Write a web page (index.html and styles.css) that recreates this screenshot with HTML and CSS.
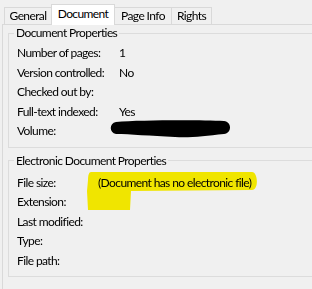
FILE: index.html
```html
<!DOCTYPE html>
<html lang="en">
<head>
    <meta charset="UTF-8">
    <meta name="viewport" content="width=device-width, initial-scale=1.0">
    <title>Document Properties</title>
    <link rel="stylesheet" href="styles.css">
</head>
<body>
    <div class="tabs">
        <div class="tab">General</div>
        <div class="tab active">Document</div>
        <div class="tab">Page Info</div>
        <div class="tab">Rights</div>
    </div>
    <div class="panel">
        <fieldset class="group">
            <legend>Document Properties</legend>
            <div class="row"><span class="label">Number of pages:</span><span class="value">1</span></div>
            <div class="row"><span class="label">Version controlled:</span><span class="value">No</span></div>
            <div class="row"><span class="label">Checked out by:</span><span class="value"></span></div>
            <div class="row"><span class="label">Full-text indexed:</span><span class="value">Yes</span></div>
            <div class="row"><span class="label">Volume:</span><span class="value"></span></div>
        </fieldset>
        <fieldset class="group group-file">
            <legend>Electronic Document Properties</legend>
            <div class="row"><span class="label">File size:</span><span class="value">(Document has no electronic file)</span></div>
            <div class="row"><span class="label">Extension:</span><span class="value"></span></div>
            <div class="row"><span class="label">Last modified:</span><span class="value"></span></div>
            <div class="row"><span class="label">Type:</span><span class="value"></span></div>
            <div class="row"><span class="label">File path:</span><span class="value"></span></div>
        </fieldset>
    </div>

    <!-- markup drawn over the screenshot -->
    <svg class="mark mark-highlight" width="312" height="289" viewBox="0 0 312 289">
        <path d="M91 172 L252 172 C258 172 259 190 252 190 L131 191 L130 210 L88 210 L87 191 L88 180 C88 175 89 172 91 172 Z" fill="#fff400"/>
    </svg>
    <svg class="mark" width="312" height="289" viewBox="0 0 312 289">
        <path d="M116 122 C140 120 200 120 224 121 C232 122 232 133 224 134 C205 136 190 138 175 137 C150 136 130 134 116 134 C109 133 109 123 116 122 Z" fill="#000"/>
    </svg>
</body>
</html>
```

FILE: styles.css
```css
body {
    margin: 0;
    background: #f0f0f0;
    color: #000;
    font-family: Lato, 'Noto Sans', sans-serif;
    font-size: 12px;
    letter-spacing: -0.6px;
    height: 289px;
    overflow: hidden;
    position: relative;
}
.tabs {
    display: flex;
    align-items: flex-end;
    height: 24px;
    padding-left: 4px;
}
.tab {
    box-sizing: border-box;
    height: 17px;
    border: 1px solid #d9d9d9;
    border-bottom: none;
    display: flex;
    align-items: center;
    justify-content: center;
    width: 48px;
    line-height: 15px;
    padding-bottom: 2px;
}
.tab.active {
    position: relative;
    z-index: 1;
    width: 64px;
    height: 21px;
    margin: 0 -1px -1px -1px;
    background: #fff;
    padding-bottom: 4px;
}
.tab:nth-child(3) { width: 58px; }
.tab:nth-child(4) { width: 41px; margin-left: -1px; }
.panel {
    border-top: 1px solid #d9d9d9;
    border-left: 1px solid #d9d9d9;
    margin-left: 2px;
    margin-right: -10px;
    height: 264px;
}
.group {
    border: 1px solid #dcdcdc;
    margin: 0 0 0 5px;
    padding: 2px 0 6px 8px;
    min-width: 0;
}
.group legend {
    margin-left: -3px;
    padding: 0 2px;
    line-height: 16px;
}
.group-file {
    margin-top: 5px;
    padding-top: 4px;
}
.row {
    display: flex;
    height: 19.5px;
    line-height: 19.5px;
    white-space: nowrap;
}
.label {
    width: 102px;
}
.group-file .label {
    width: 81px;
}
.mark {
    position: absolute;
    top: 0;
    left: 0;
    pointer-events: none;
}
.mark-highlight {
    mix-blend-mode: multiply;
}
```
